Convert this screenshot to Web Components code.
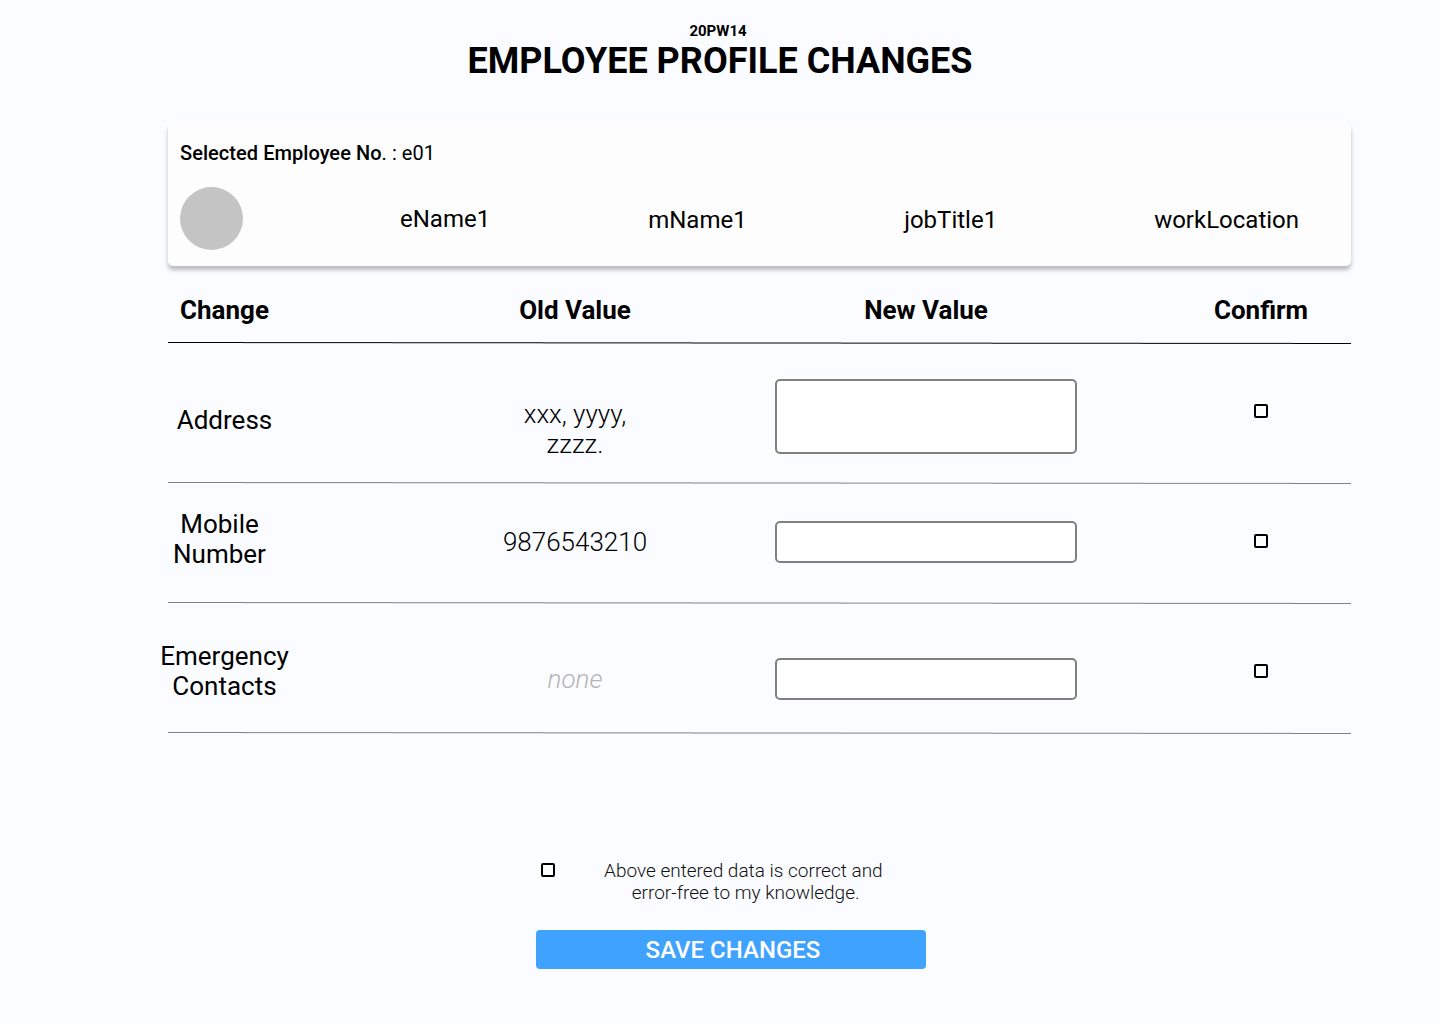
<!DOCTYPE html>
<html lang="en"><head><meta charset="utf-8"><title>Employee Profile Changes</title>
<style>
html,body{margin:0;padding:0;background:#fbfcff;font-family:Roboto,"Liberation Sans",sans-serif;color:#000}
</style></head><body>
<profile-page>
  <page-heading code="20PW14" title="EMPLOYEE PROFILE CHANGES"></page-heading>
  <employee-card number="e01" name="eName1" manager="mName1" job="jobTitle1" location="workLocation"></employee-card>
  <change-header></change-header>
  <change-row h="140" label-top="61" old-top="55" input-top="35" input-h="75" check-top="60" label-shift="0">
    <span slot="label">Address</span><span slot="old">xxx, yyyy,<br>zzzz.</span>
  </change-row>
  <change-row h="120" label-top="25" old-top="43" input-top="37" input-h="42" check-top="50" label-shift="-10">
    <span slot="label">Mobile<br>Number</span><span slot="old">9876543210</span>
  </change-row>
  <change-row h="130" label-top="37" old-top="60" input-top="54" input-h="42" check-top="60" label-shift="0" none>
    <span slot="label">Emergency<br>Contacts</span><span slot="old">none</span>
  </change-row>
  <confirm-footer></confirm-footer>
</profile-page>
<script>
/* The reference's rules are 1px lines with a very slight slope: each spreads over two pixel rows in steps. */
function slopedRule(rgb){
  const stops=[0,75,224,375,524,673,824,974,1125,1183];
  const grad=f=>{
    const parts=[];
    for(let i=0;i<stops.length-1;i++){
      const a=f(i/8);
      parts.push(`rgba(${rgb},${a}) ${stops[i]}px ${stops[i+1]}px`);
    }
    return `linear-gradient(90deg,${parts.join(',')})`;
  };
  return `background-image:${grad(t=>1-t)},${grad(t=>t)};background-size:100% 1px;background-repeat:no-repeat;background-position:0 calc(100% - 1px),0 100%;`;
}
function make(name,html){
  customElements.define(name,class extends HTMLElement{
    connectedCallback(){
      if(this.shadowRoot)return;
      this.attachShadow({mode:'open'}).innerHTML=html(this);
    }
  });
}
make('profile-page',()=>`<style>:host{display:block;width:1440px;height:1024px;box-sizing:border-box;padding:22px 89px 0 168px;overflow:hidden}</style><slot></slot>`);
make('page-heading',e=>`<style>
:host{display:flex;flex-direction:column;align-items:center;width:1104px;height:101px}
.c{font:700 15px/18px Roboto,sans-serif;margin-left:-4px}
h1{margin:0;font:700 36px/42px Roboto,sans-serif}
</style><div class="c">${e.getAttribute('code')}</div><h1>${e.getAttribute('title')}</h1>`);
make('employee-card',e=>`<style>
:host{display:block;width:1183px;height:143px;box-sizing:border-box;background:#fdfdfd;border-radius:5px;box-shadow:0 4px 4px rgba(0,0,0,.25);padding:19px 0 0 12px}
.n{font:400 20px/23px Roboto,sans-serif;height:45px;letter-spacing:.05px}
b{font-weight:500}
.r{display:flex;align-items:center;height:63px;font:400 24px/28px Roboto,sans-serif}
.a{width:63px;height:63px;border-radius:50%;background:#c4c4c4;flex:none}
span{white-space:nowrap;padding-top:2px}
</style><div class="n"><b>Selected Employee No</b>. : ${e.getAttribute('number')}</div>
<div class="r"><div class="a"></div>
<span style="margin-left:157px;padding-top:0">${e.getAttribute('name')}</span>
<span style="margin-left:158px">${e.getAttribute('manager')}</span>
<span style="margin-left:157.5px">${e.getAttribute('job')}</span>
<span style="margin-left:157px">${e.getAttribute('location')}</span></div>`);
make('change-header',()=>`<style>
:host{display:flex;width:1183px;height:78px;box-sizing:border-box;font:700 26px/30px Roboto,sans-serif;padding-top:29px;${slopedRule('0,0,0')}}
span{display:block;text-align:center;white-space:nowrap}
</style><span style="width:113px">Change</span><span style="width:300px;margin-left:144px">Old Value</span><span style="width:300px;margin-left:51px">New Value</span><span style="width:180px;margin-left:95px">Confirm</span>`);
make('change-row',e=>{const g=n=>e.getAttribute(n);return `<style>
:host{display:flex;align-items:flex-start;width:1183px;height:${g('h')}px;box-sizing:border-box;font:400 26px/30px Roboto,sans-serif;text-align:center;${slopedRule('128,128,128')}}
.l{width:113px;display:flex;justify-content:center;white-space:nowrap;padding-top:${g('label-top')}px}
.l ::slotted(span){margin-left:${g('label-shift')}px}
.o{width:300px;margin-left:144px;font-weight:300;padding-top:${g('old-top')}px;${e.hasAttribute('none')?'font-style:italic;color:#b4b4b4;':''}}
.i{width:300px;margin-left:51px;padding-top:${g('input-top')}px}
input{display:block;width:302px;height:${g('input-h')}px;margin:0 0 0 -1px;box-sizing:border-box;background:#fff;border:2px solid #808080;border-radius:5px;padding:0;outline:none}
.c{width:180px;margin-left:95px;display:flex;justify-content:center;padding-top:${g('check-top')}px}
</style>
<div class="l"><slot name="label"></slot></div><div class="o"><slot name="old"></slot></div>
<div class="i"><input type="text" aria-label="New value"></div><div class="c"><check-box></check-box></div>`});
make('check-box',()=>`<style>:host{display:block;width:14px;height:14px;box-sizing:border-box;border:2px solid #000;border-radius:2px;background:#fdfdfd}</style>`);
make('confirm-footer',()=>`<style>
:host{display:block;margin-top:125px;margin-left:368px;width:400px;font:300 19px/22px Roboto,sans-serif}
.t{display:flex;align-items:flex-start;height:71px}
check-box{margin:4px 0 0 5px;flex:none}
p{margin:1px 0 0 49px;text-align:center;white-space:nowrap;color:#111}
button{display:block;width:390px;height:39px;border:0;border-radius:4px;background:#3fa2ff;color:#fff;font:500 24px/39px Roboto,sans-serif;padding:1px 0 0 4px;text-align:center}
</style><div class="t"><check-box></check-box><p>Above entered data is correct and<br>&nbsp;error-free to my knowledge.</p></div><button>SAVE CHANGES</button>`);
</script>
</body></html>
